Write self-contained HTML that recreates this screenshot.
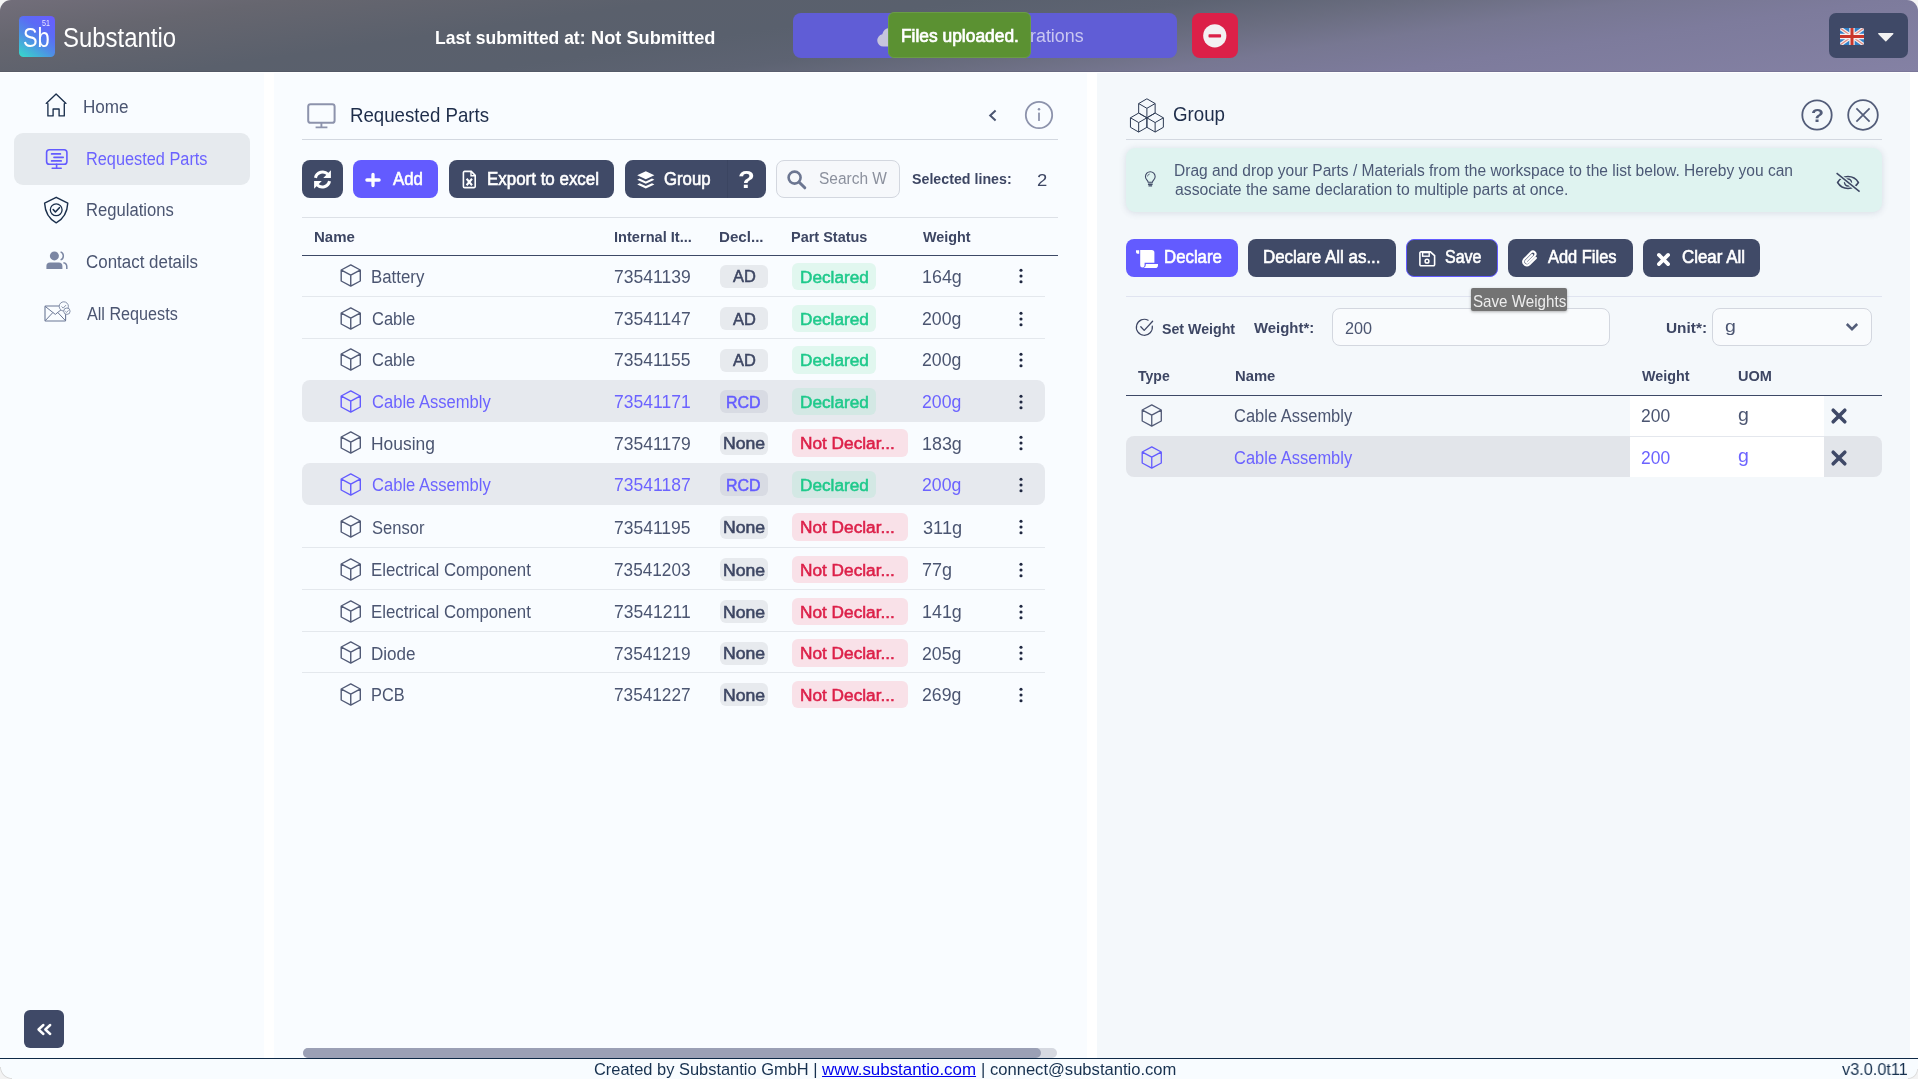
<!DOCTYPE html>
<html>
<head>
<meta charset="utf-8">
<title>Substantio</title>
<style>
*{box-sizing:border-box;margin:0;padding:0}
html,body{width:1918px;height:1079px;overflow:hidden;background:#ffffff;font-family:"Liberation Sans",sans-serif;color:#3d4663}
#w{position:absolute;left:0;top:0;width:1918px;height:1079px;will-change:transform}
.abs{position:absolute}
svg.abs{overflow:visible}
.t{position:absolute;white-space:nowrap;transform-origin:0 50%;display:block;line-height:40px}
#hdr{position:absolute;left:0;top:0;width:1918px;height:72px;border-radius:11px 11px 0 0;box-shadow:inset 0 -1px 0 rgba(20,25,45,.09);background:linear-gradient(171.8deg,#726e7a 0%,#66666f 12%,#5a606c 28%,#59606d 40%,#5d6372 50%,#6a6d80 59%,#777792 68%,#7d7b9c 78%,#8481a4 100%)}
#bgwhite{position:absolute;left:0;top:0;width:1918px;height:20px;background:#f5f5f5}
#side{position:absolute;left:0;top:73.2px;width:263.7px;height:984.8px;background:#f9fcff}
#main{position:absolute;left:274.2px;top:73.2px;width:812.5px;height:984.8px;background:#f9fcff}
#right{position:absolute;left:1097px;top:73.2px;width:812.8px;height:985px;background:#f4f8fb}
#foot{position:absolute;left:0;top:1058px;width:1918px;height:21px;border-top:1px solid #0e2946;background:#f8fcff}
.cbl{position:absolute;left:0;top:1067px;width:12px;height:12px;background:radial-gradient(circle at 100% 0,rgba(243,243,243,0) 10.6px,#d9d9d9 11.4px,#f3f3f3 12.4px)}
.cbr{position:absolute;left:1908px;top:1069px;width:10px;height:10px;background:radial-gradient(circle at 0 0,rgba(243,243,243,0) 8.6px,#dcdcdc 9.4px,#f3f3f3 10.4px)}
</style>
</head>
<body>
<div id="w">
<div id="bgwhite"></div>
<div id="hdr"></div>
<div id="side"></div>
<div id="main"></div>
<div id="right"></div>
<div id="foot"></div>
<div class="cbl"></div>
<div class="cbr"></div>
<!--HEADER-->
<div class="abs" style="left:19px;top:16px;width:36px;height:41px;border-radius:4.5px;background:linear-gradient(35deg,#36dcc8 0%,#4f8de6 40%,#5b6cf5 65%,#6a5cff 100%)"></div>
<span class="t" style="left:23.02px;top:17px;font-size:28.2px;color:#fff;transform:scaleX(0.7748);">Sb</span>
<span class="t" style="left:42.22px;top:3px;font-size:8.6px;color:#e8e6ff;transform:scaleX(0.8281);">51</span>
<span class="t" style="left:62.92px;top:17px;font-size:28.2px;color:#fff;transform:scaleX(0.8483);">Substantio</span>
<span class="t" style="left:435.06px;top:18px;font-size:18.6px;color:#fff;transform:scaleX(0.9398);font-weight:bold;">Last submitted at:</span>
<span class="t" style="left:590.52px;top:18px;font-size:18.6px;color:#fff;transform:scaleX(0.9790);font-weight:bold;">Not Submitted</span>
<div class="abs" style="left:793.00px;top:13.00px;width:384.00px;height:45.00px;background:#605dd6;border-radius:8px;"></div>
<svg class="abs" style="left:875.80px;top:23.80px;" width="29.00" height="23.60" viewBox="0 0 28 23"><path d="M7 22a6 6 0 0 1-1-11.9A8 8 0 0 1 21 8.5 6.8 6.8 0 0 1 21 22z" fill="#c6c5dc"/></svg>
<span class="t" style="left:1030.04px;top:16px;font-size:17.6px;color:#c9c7f1;transform:scaleX(1.0149);">rations</span>
<div class="abs" style="left:888px;top:12px;width:142.5px;height:45.5px;background:#5b9132;border-radius:6px;border:1px solid #6a9c45"></div>
<span class="t" style="left:900.61px;top:16px;font-size:17.6px;color:#fff;transform:scaleX(0.9878);-webkit-text-stroke:0.7px #fff;">Files uploaded.</span>
<div class="abs" style="left:1192.00px;top:13.00px;width:45.50px;height:45.00px;background:#dc2048;border-radius:8px;"></div>
<svg class="abs" style="left:1202.70px;top:24.00px;" width="23.60" height="23.60" viewBox="0 0 24 24"><circle cx="12" cy="12" r="11.8" fill="#f3f1f3"/><rect x="5.6" y="10.4" width="12.8" height="3.3" rx=".8" fill="#dc2048"/></svg>
<div class="abs" style="left:1829.00px;top:13.00px;width:79.00px;height:45.00px;background:#3f4967;border-radius:7px;"></div>
<svg class="abs" style="left:1840.00px;top:27.50px;" width="24.00" height="17.00" viewBox="0 0 24 17"><defs><clipPath id="fc"><rect width="24" height="17" rx="2"/></clipPath></defs><g clip-path="url(#fc)"><rect width="24" height="17" fill="#2f80c8"/><path d="M0 0L24 17M24 0L0 17" stroke="#f4ecec" stroke-width="3.6"/><path d="M0 0L24 17M24 0L0 17" stroke="#e08a80" stroke-width="1.2"/><path d="M12 0V17M0 8.5H24" stroke="#f6eeee" stroke-width="5.4"/><path d="M12 0V17M0 8.5H24" stroke="#c9362b" stroke-width="3"/></g></svg>
<svg class="abs" style="left:1877.50px;top:32.80px;" width="15.60" height="8.60" viewBox="0 0 15.6 8.6"><path d="M.6 0H15a.6.6 0 0 1 .4 1L8.3 8.3a.7.7 0 0 1-1 0L.2 1A.6.6 0 0 1 .6 0z" fill="#f1f1f1"/></svg>
<!--SIDEBAR-->
<div class="abs" style="left:14.00px;top:133.00px;width:236.00px;height:51.50px;background:#e6eaee;border-radius:9px;"></div>
<svg class="abs" style="left:44.60px;top:93.40px;" width="22.40" height="24.60" viewBox="0 0 22.4 24.6"><path d="M1.200 10.400L11.100 1 21 10.400M2.900 10.800V22.900h5.200V16h6V22.900h5.200V10.800" fill="none" stroke="#1b2f4c" stroke-width="1.350" stroke-linejoin="round" stroke-linecap="round"/></svg>
<span class="t" style="left:83.23px;top:87px;font-size:17.6px;color:#4b5571;transform:scaleX(0.9712);">Home</span>
<svg class="abs" style="left:45.00px;top:148.00px;" width="24.00" height="22.00" viewBox="0 0 24 22"><rect x="1.6" y="1.8" width="20.300" height="14.400" rx="2.800" fill="none" stroke="#635bff" stroke-width="1.600"/><path d="M6.600 5.900h8.800M9 9.300h9.200M6.600 12.900h9.600" stroke="#635bff" stroke-width="1.700" stroke-linecap="round"/><path d="M11.600 16.400V20M7.200 20.300h9" stroke="#635bff" stroke-width="1.600" stroke-linecap="round"/></svg>
<span class="t" style="left:85.69px;top:139px;font-size:17.6px;color:#6c63ff;transform:scaleX(0.9272);">Requested Parts</span>
<svg class="abs" style="left:43.40px;top:195.70px;" width="26.40" height="28.00" viewBox="0 0 26.4 28"><path d="M13.200 1.300L24.800 7.100c-.5 9-4 15.600-11.600 19.700C5.600 22.700 2.100 16.100 1.600 7.100z" fill="none" stroke="#1b2f4c" stroke-width="1.4" stroke-linejoin="round"/><circle cx="13.200" cy="13.800" r="5.900" fill="none" stroke="#1b2f4c" stroke-width="1.300"/><path d="M10.200 13.500l2.200 2.500 4-4.300" fill="none" stroke="#1b2f4c" stroke-width="1.6" stroke-linecap="round" stroke-linejoin="round"/></svg>
<span class="t" style="left:85.67px;top:190px;font-size:17.6px;color:#4b5571;transform:scaleX(0.9439);">Regulations</span>
<svg class="abs" style="left:45.60px;top:251.00px;" width="22.00" height="18.60" viewBox="0 0 22 18.6"><circle cx="8.4" cy="4.9" r="4.5" fill="#7b86a3"/><path d="M.4 17.9V15a3.6 3.6 0 0 1 3.6-3.6h8.8a3.6 3.6 0 0 1 3.6 3.6v2.9z" fill="#7b86a3"/><path d="M14.6 .9a4.3 4.3 0 0 1 0 8" fill="none" stroke="#7b86a3" stroke-width="1.5"/><path d="M17.4 11.8a4 4 0 0 1 3.4 4v2.2" fill="none" stroke="#7b86a3" stroke-width="1.5"/></svg>
<span class="t" style="left:85.95px;top:242px;font-size:17.6px;color:#4b5571;transform:scaleX(0.9623);">Contact details</span>
<svg class="abs" style="left:44.40px;top:301.40px;" width="27.00" height="21.00" viewBox="0 0 27 21"><rect x="1" y="5" width="20.6" height="15" rx=".8" fill="none" stroke="#6b7795" stroke-width="1.1"/><path d="M1.2 5.4l10.1 8 10-8M1.3 19.6l7.5-8M21.4 19.6l-7.5-8" fill="none" stroke="#6b7795" stroke-width="1"/><circle cx="19.8" cy="5.4" r="4.6" fill="#f9fcff" stroke="#6b7795" stroke-width=".8"/><path d="M17.6 5.5l1.6 1.6 2.8-3" fill="none" stroke="#6b7795" stroke-width=".8"/><circle cx="22.9" cy="10.2" r="3.2" fill="#f9fcff" stroke="#6b7795" stroke-width=".8"/><path d="M21.4 10.3l1.1 1.1 2-2.1" fill="none" stroke="#6b7795" stroke-width=".8"/></svg>
<span class="t" style="left:86.60px;top:294px;font-size:17.6px;color:#4b5571;transform:scaleX(0.9185);">All Requests</span>
<div class="abs" style="left:24.00px;top:1010.00px;width:40.00px;height:38.00px;background:#3f4967;border-radius:6px;"></div>
<svg class="abs" style="left:35.00px;top:1021.00px;" width="18.00" height="17.00" viewBox="0 0 18 17"><path d="M8.4 4L3.5 8.5 8.4 13M15.2 4L10.3 8.5l4.9 4.5" fill="none" stroke="#fff" stroke-width="2.4" stroke-linejoin="round" stroke-linecap="round"/></svg>
<!--MAIN-->
<svg class="abs" style="left:306.00px;top:102.00px;" width="32.00" height="28.00" viewBox="0 0 32 28"><rect x="2.2" y="2.2" width="26.4" height="18.6" rx="2.4" fill="none" stroke="#8d93ac" stroke-width="2"/><path d="M15.4 20.8v4.2M9.6 25.4h11.8" stroke="#8d93ac" stroke-width="1.9" fill="none"/></svg>
<span class="t" style="left:349.51px;top:95px;font-size:19.8px;color:#1e2d4a;transform:scaleX(0.9433);">Requested Parts</span>
<svg class="abs" style="left:987.00px;top:107.60px;" width="12.00" height="15.00" viewBox="0 0 12 15"><path d="M8.6 2.4L3.2 7.5l5.4 5.1" fill="none" stroke="#4b5571" stroke-width="2"/></svg>
<svg class="abs" style="left:1023.00px;top:99.00px;" width="32.00" height="32.00" viewBox="0 0 32 32"><circle cx="16" cy="16" r="13.2" fill="none" stroke="#8d93ac" stroke-width="1.8"/><circle cx="16" cy="10.2" r="1.25" fill="#8d93ac"/><rect x="15.1" y="13.4" width="1.8" height="8.6" rx=".6" fill="#8d93ac"/></svg>
<div class="abs" style="left:302.00px;top:139.00px;width:756.00px;height:1.00px;background:#d3d8e0;border-radius:0px;"></div>
<div class="abs" style="left:302.00px;top:160.00px;width:41.00px;height:38.00px;background:#404a67;border-radius:8px;"></div>
<svg class="abs" style="left:312.40px;top:169.40px;" width="21.00" height="21.00" viewBox="0 0 20 20"><path d="M3.3 8.4A7 7 0 0 1 15.2 5M16.7 11.600A7 7 0 0 1 4.800 15" fill="none" stroke="#fff" stroke-width="2.9"/><path d="M18 1.300v7.300h-7.300zM2 18.700v-7.300h7.300z" fill="#fff"/></svg>
<div class="abs" style="left:353.00px;top:160.00px;width:85.00px;height:38.00px;background:#635bff;border-radius:8px;"></div>
<svg class="abs" style="left:365.00px;top:171.50px;" width="16.00" height="16.00" viewBox="0 0 16 16"><path d="M8 2.400v11.200M1.900 8h12.200" stroke="#fff" stroke-width="3.300" stroke-linecap="round"/></svg>
<span class="t" style="left:392.50px;top:159px;font-size:17.6px;color:#fff;transform:scaleX(0.9580);-webkit-text-stroke:0.6px #fff;">Add</span>
<div class="abs" style="left:449.00px;top:160.00px;width:165.00px;height:38.00px;background:#404a67;border-radius:8px;"></div>
<svg class="abs" style="left:461.60px;top:170.20px;" width="15.00" height="19.00" viewBox="0 0 15 19"><path d="M2.6 1.4h6.6l4 4v11a1.2 1.2 0 0 1-1.2 1.2H2.6a1.2 1.2 0 0 1-1.2-1.2V2.600a1.2 1.2 0 0 1 1.2-1.200z" fill="none" stroke="#fff" stroke-width="1.6"/><path d="M9 1.400v4.400h4.400" fill="none" stroke="#fff" stroke-width="1.4"/><path d="M4.600 8.800l5.400 6.400M10 8.800l-5.400 6.400" stroke="#fff" stroke-width="2.100"/></svg>
<span class="t" style="left:486.64px;top:159px;font-size:17.6px;color:#fff;transform:scaleX(0.9625);-webkit-text-stroke:0.6px #fff;">Export to excel</span>
<div class="abs" style="left:625.00px;top:160.00px;width:141.00px;height:38.00px;background:#404a67;border-radius:8px;"></div>
<div class="abs" style="left:726.50px;top:160.00px;width:1.00px;height:38.00px;background:#3b4561;border-radius:0px;"></div>
<svg class="abs" style="left:636.00px;top:169.50px;" width="19.60" height="20.00" viewBox="0 0 19.6 20"><path d="M9.8 1.200l8.600 4-8.600 4-8.600-4z" fill="#fff"/><path d="M3.600 8.600L1.200 9.800l8.600 4 8.600-4-2.400-1.200-6.200 2.900z" fill="#fff"/><path d="M3.600 13.200l-2.400 1.200 8.600 4 8.600-4-2.400-1.200-6.200 2.900z" fill="#fff"/></svg>
<span class="t" style="left:663.86px;top:159px;font-size:17.6px;color:#fff;transform:scaleX(0.9526);-webkit-text-stroke:0.6px #fff;">Group</span>
<span class="t" style="left:738.36px;top:160px;font-size:23.5px;color:#fff;transform:scaleX(1.1681);font-weight:bold;">?</span>
<div class="abs" style="left:776px;top:160px;width:124px;height:38px;background:#f6f8fb;border:1px solid #d3d7df;border-radius:8px"></div>
<svg class="abs" style="left:786.00px;top:168.50px;" width="21.00" height="21.00" viewBox="0 0 21 21"><circle cx="8.6" cy="8.600" r="6" fill="none" stroke="#6c7691" stroke-width="2.600"/><path d="M13.200 13.200l5.600 5.600" stroke="#6c7691" stroke-width="3" stroke-linecap="round"/></svg>
<div class="abs" style="left:819px;top:165px;width:68px;height:28px;overflow:hidden">
<span class="t" style="left:0.10px;top:-7px;font-size:17.4px;color:#8b909d;transform:scaleX(0.8898);">Search Workspace</span>
</div>
<span class="t" style="left:911.64px;top:159px;font-size:14.6px;color:#3d4663;transform:scaleX(0.9749);font-weight:bold;">Selected lines:</span>
<span class="t" style="left:1036.58px;top:161px;font-size:16.6px;color:#3d4663;transform:scaleX(1.1131);">2</span>
<div class="abs" style="left:302.00px;top:217.00px;width:756.00px;height:1.00px;background:#dde1e7;border-radius:0px;"></div>
<span class="t" style="left:314.02px;top:217px;font-size:14.9px;color:#3d4663;transform:scaleX(1.0080);font-weight:bold;">Name</span>
<span class="t" style="left:614.05px;top:217px;font-size:14.9px;color:#3d4663;transform:scaleX(0.9809);font-weight:bold;">Internal It...</span>
<span class="t" style="left:719.02px;top:217px;font-size:14.9px;color:#3d4663;transform:scaleX(1.0157);font-weight:bold;">Decl...</span>
<span class="t" style="left:791.06px;top:217px;font-size:14.9px;color:#3d4663;transform:scaleX(0.9717);font-weight:bold;">Part Status</span>
<span class="t" style="left:923.00px;top:217px;font-size:14.9px;color:#3d4663;transform:scaleX(0.9646);font-weight:bold;">Weight</span>
<div class="abs" style="left:302.00px;top:255.00px;width:756.00px;height:1.00px;background:#3d4966;border-radius:0px;"></div>
<div class="abs" style="left:302.00px;top:296.00px;width:743.00px;height:1.00px;background:#e4e8ed;border-radius:0px;"></div>
<svg class="abs" style="left:338.60px;top:263.00px;" width="23.50" height="25.00" viewBox="0 0 23.5 25"><path d="M11.75 1.9L21.3 7v11L11.75 23.1 2.2 18V7zM2.4 7.1l9.35 5 9.35-5M11.75 12.2V23" fill="none" stroke="#515a76" stroke-width="1.4" stroke-linejoin="round"/></svg>
<span class="t" style="left:371.05px;top:257px;font-size:17.6px;color:#4b5571;transform:scaleX(0.9562);">Battery</span>
<span class="t" style="left:614.12px;top:257px;font-size:17.6px;color:#4b5571;transform:scaleX(0.9956);">73541139</span>
<div class="abs" style="left:720.00px;top:264.90px;width:48.00px;height:23.20px;background:#e7eaee;border-radius:6px;"></div>
<span class="t" style="left:733.00px;top:256px;font-size:17.4px;color:#3d4663;transform:scaleX(0.9436);-webkit-text-stroke:0.55px #3d4663;">AD</span>
<div class="abs" style="left:792.00px;top:262.50px;width:84.00px;height:27.60px;background:#e1f7ef;border-radius:6px;"></div>
<span class="t" style="left:799.92px;top:257px;font-size:17.4px;color:#1fc98b;transform:scaleX(0.9901);-webkit-text-stroke:0.55px #1fc98b;">Declared</span>
<span class="t" style="left:921.86px;top:257px;font-size:17.6px;color:#4b5571;transform:scaleX(1.0167);">164g</span>
<svg class="abs" style="left:1019.00px;top:268.30px;" width="4.00" height="16.00" viewBox="0 0 4 16"><circle cx="2" cy="2.2" r="1.55" fill="#1f2740"/><circle cx="2" cy="8" r="1.55" fill="#1f2740"/><circle cx="2" cy="13.8" r="1.55" fill="#1f2740"/></svg>
<div class="abs" style="left:302.00px;top:338.00px;width:743.00px;height:1.00px;background:#e4e8ed;border-radius:0px;"></div>
<svg class="abs" style="left:338.60px;top:305.90px;" width="23.50" height="25.00" viewBox="0 0 23.5 25"><path d="M11.75 1.9L21.3 7v11L11.75 23.1 2.2 18V7zM2.4 7.1l9.35 5 9.35-5M11.75 12.2V23" fill="none" stroke="#515a76" stroke-width="1.4" stroke-linejoin="round"/></svg>
<span class="t" style="left:371.57px;top:299px;font-size:17.6px;color:#4b5571;transform:scaleX(0.9380);">Cable</span>
<span class="t" style="left:614.12px;top:299px;font-size:17.6px;color:#4b5571;transform:scaleX(0.9956);">73541147</span>
<div class="abs" style="left:720.00px;top:307.10px;width:48.00px;height:23.20px;background:#e7eaee;border-radius:6px;"></div>
<span class="t" style="left:733.00px;top:299px;font-size:17.4px;color:#3d4663;transform:scaleX(0.9436);-webkit-text-stroke:0.55px #3d4663;">AD</span>
<div class="abs" style="left:792.00px;top:304.70px;width:84.00px;height:27.60px;background:#e1f7ef;border-radius:6px;"></div>
<span class="t" style="left:799.92px;top:299px;font-size:17.4px;color:#1fc98b;transform:scaleX(0.9901);-webkit-text-stroke:0.55px #1fc98b;">Declared</span>
<span class="t" style="left:922.32px;top:299px;font-size:17.6px;color:#4b5571;transform:scaleX(1.0047);">200g</span>
<svg class="abs" style="left:1019.00px;top:310.50px;" width="4.00" height="16.00" viewBox="0 0 4 16"><circle cx="2" cy="2.2" r="1.55" fill="#1f2740"/><circle cx="2" cy="8" r="1.55" fill="#1f2740"/><circle cx="2" cy="13.8" r="1.55" fill="#1f2740"/></svg>
<svg class="abs" style="left:338.60px;top:347.40px;" width="23.50" height="25.00" viewBox="0 0 23.5 25"><path d="M11.75 1.9L21.3 7v11L11.75 23.1 2.2 18V7zM2.4 7.1l9.35 5 9.35-5M11.75 12.2V23" fill="none" stroke="#515a76" stroke-width="1.4" stroke-linejoin="round"/></svg>
<span class="t" style="left:371.57px;top:340px;font-size:17.6px;color:#4b5571;transform:scaleX(0.9380);">Cable</span>
<span class="t" style="left:614.12px;top:340px;font-size:17.6px;color:#4b5571;transform:scaleX(0.9945);">73541155</span>
<div class="abs" style="left:720.00px;top:348.60px;width:48.00px;height:23.20px;background:#e7eaee;border-radius:6px;"></div>
<span class="t" style="left:733.00px;top:340px;font-size:17.4px;color:#3d4663;transform:scaleX(0.9436);-webkit-text-stroke:0.55px #3d4663;">AD</span>
<div class="abs" style="left:792.00px;top:346.20px;width:84.00px;height:27.60px;background:#e1f7ef;border-radius:6px;"></div>
<span class="t" style="left:799.92px;top:340px;font-size:17.4px;color:#1fc98b;transform:scaleX(0.9901);-webkit-text-stroke:0.55px #1fc98b;">Declared</span>
<span class="t" style="left:922.32px;top:340px;font-size:17.6px;color:#4b5571;transform:scaleX(1.0047);">200g</span>
<svg class="abs" style="left:1019.00px;top:352.00px;" width="4.00" height="16.00" viewBox="0 0 4 16"><circle cx="2" cy="2.2" r="1.55" fill="#1f2740"/><circle cx="2" cy="8" r="1.55" fill="#1f2740"/><circle cx="2" cy="13.8" r="1.55" fill="#1f2740"/></svg>
<div class="abs" style="left:302.00px;top:380.00px;width:743.00px;height:42.00px;background:#e6e9ee;border-radius:8px;"></div>
<svg class="abs" style="left:338.60px;top:388.90px;" width="23.50" height="25.00" viewBox="0 0 23.5 25"><path d="M11.75 1.9L21.3 7v11L11.75 23.1 2.2 18V7zM2.4 7.1l9.35 5 9.35-5M11.75 12.2V23" fill="none" stroke="#635bff" stroke-width="1.4" stroke-linejoin="round"/></svg>
<span class="t" style="left:371.57px;top:382px;font-size:17.6px;color:#6c63ff;transform:scaleX(0.9416);">Cable Assembly</span>
<span class="t" style="left:614.12px;top:382px;font-size:17.6px;color:#6c63ff;transform:scaleX(0.9956);">73541171</span>
<div class="abs" style="left:720.00px;top:390.10px;width:48.00px;height:23.20px;background:#d8dbe3;border-radius:6px;"></div>
<span class="t" style="left:726.42px;top:382px;font-size:17.4px;color:#635bff;transform:scaleX(0.9184);-webkit-text-stroke:0.55px #635bff;">RCD</span>
<div class="abs" style="left:792.00px;top:387.70px;width:84.00px;height:27.60px;background:#d3e8e4;border-radius:6px;"></div>
<span class="t" style="left:799.92px;top:382px;font-size:17.4px;color:#1fc98b;transform:scaleX(0.9901);-webkit-text-stroke:0.55px #1fc98b;">Declared</span>
<span class="t" style="left:922.32px;top:382px;font-size:17.6px;color:#6c63ff;transform:scaleX(1.0047);">200g</span>
<svg class="abs" style="left:1019.00px;top:393.50px;" width="4.00" height="16.00" viewBox="0 0 4 16"><circle cx="2" cy="2.2" r="1.55" fill="#1f2740"/><circle cx="2" cy="8" r="1.55" fill="#1f2740"/><circle cx="2" cy="13.8" r="1.55" fill="#1f2740"/></svg>
<svg class="abs" style="left:338.60px;top:430.40px;" width="23.50" height="25.00" viewBox="0 0 23.5 25"><path d="M11.75 1.9L21.3 7v11L11.75 23.1 2.2 18V7zM2.4 7.1l9.35 5 9.35-5M11.75 12.2V23" fill="none" stroke="#515a76" stroke-width="1.4" stroke-linejoin="round"/></svg>
<span class="t" style="left:371.01px;top:424px;font-size:17.6px;color:#4b5571;transform:scaleX(0.9899);">Housing</span>
<span class="t" style="left:614.12px;top:424px;font-size:17.6px;color:#4b5571;transform:scaleX(0.9956);">73541179</span>
<div class="abs" style="left:720.00px;top:431.60px;width:48.00px;height:23.20px;background:#e7eaee;border-radius:6px;"></div>
<span class="t" style="left:722.59px;top:423px;font-size:17.4px;color:#3d4663;transform:scaleX(1.0127);-webkit-text-stroke:0.55px #3d4663;">None</span>
<div class="abs" style="left:792.00px;top:429.20px;width:116.00px;height:27.60px;background:#f9e1e8;border-radius:6px;"></div>
<span class="t" style="left:799.92px;top:423px;font-size:17.4px;color:#dc2049;transform:scaleX(0.9911);-webkit-text-stroke:0.55px #dc2049;">Not Declar...</span>
<span class="t" style="left:921.86px;top:424px;font-size:17.6px;color:#4b5571;transform:scaleX(1.0167);">183g</span>
<svg class="abs" style="left:1019.00px;top:435.00px;" width="4.00" height="16.00" viewBox="0 0 4 16"><circle cx="2" cy="2.2" r="1.55" fill="#1f2740"/><circle cx="2" cy="8" r="1.55" fill="#1f2740"/><circle cx="2" cy="13.8" r="1.55" fill="#1f2740"/></svg>
<div class="abs" style="left:302.00px;top:463.00px;width:743.00px;height:42.00px;background:#e6e9ee;border-radius:8px;"></div>
<svg class="abs" style="left:338.60px;top:471.90px;" width="23.50" height="25.00" viewBox="0 0 23.5 25"><path d="M11.75 1.9L21.3 7v11L11.75 23.1 2.2 18V7zM2.4 7.1l9.35 5 9.35-5M11.75 12.2V23" fill="none" stroke="#635bff" stroke-width="1.4" stroke-linejoin="round"/></svg>
<span class="t" style="left:371.57px;top:465px;font-size:17.6px;color:#6c63ff;transform:scaleX(0.9416);">Cable Assembly</span>
<span class="t" style="left:614.12px;top:465px;font-size:17.6px;color:#6c63ff;transform:scaleX(0.9956);">73541187</span>
<div class="abs" style="left:720.00px;top:473.10px;width:48.00px;height:23.20px;background:#d8dbe3;border-radius:6px;"></div>
<span class="t" style="left:726.42px;top:465px;font-size:17.4px;color:#635bff;transform:scaleX(0.9184);-webkit-text-stroke:0.55px #635bff;">RCD</span>
<div class="abs" style="left:792.00px;top:470.70px;width:84.00px;height:27.60px;background:#d3e8e4;border-radius:6px;"></div>
<span class="t" style="left:799.92px;top:465px;font-size:17.4px;color:#1fc98b;transform:scaleX(0.9901);-webkit-text-stroke:0.55px #1fc98b;">Declared</span>
<span class="t" style="left:922.32px;top:465px;font-size:17.6px;color:#6c63ff;transform:scaleX(1.0047);">200g</span>
<svg class="abs" style="left:1019.00px;top:476.50px;" width="4.00" height="16.00" viewBox="0 0 4 16"><circle cx="2" cy="2.2" r="1.55" fill="#1f2740"/><circle cx="2" cy="8" r="1.55" fill="#1f2740"/><circle cx="2" cy="13.8" r="1.55" fill="#1f2740"/></svg>
<div class="abs" style="left:302.00px;top:547.00px;width:743.00px;height:1.00px;background:#e4e8ed;border-radius:0px;"></div>
<svg class="abs" style="left:338.60px;top:514.40px;" width="23.50" height="25.00" viewBox="0 0 23.5 25"><path d="M11.75 1.9L21.3 7v11L11.75 23.1 2.2 18V7zM2.4 7.1l9.35 5 9.35-5M11.75 12.2V23" fill="none" stroke="#515a76" stroke-width="1.4" stroke-linejoin="round"/></svg>
<span class="t" style="left:371.65px;top:508px;font-size:17.6px;color:#4b5571;transform:scaleX(0.9409);">Sensor</span>
<span class="t" style="left:614.12px;top:508px;font-size:17.6px;color:#4b5571;transform:scaleX(0.9945);">73541195</span>
<div class="abs" style="left:720.00px;top:515.60px;width:48.00px;height:23.20px;background:#e7eaee;border-radius:6px;"></div>
<span class="t" style="left:722.59px;top:507px;font-size:17.4px;color:#3d4663;transform:scaleX(1.0127);-webkit-text-stroke:0.55px #3d4663;">None</span>
<div class="abs" style="left:792.00px;top:513.20px;width:116.00px;height:27.60px;background:#f9e1e8;border-radius:6px;"></div>
<span class="t" style="left:799.92px;top:507px;font-size:17.4px;color:#dc2049;transform:scaleX(0.9911);-webkit-text-stroke:0.55px #dc2049;">Not Declar...</span>
<span class="t" style="left:922.56px;top:508px;font-size:17.6px;color:#4b5571;transform:scaleX(1.0341);">311g</span>
<svg class="abs" style="left:1019.00px;top:519.00px;" width="4.00" height="16.00" viewBox="0 0 4 16"><circle cx="2" cy="2.2" r="1.55" fill="#1f2740"/><circle cx="2" cy="8" r="1.55" fill="#1f2740"/><circle cx="2" cy="13.8" r="1.55" fill="#1f2740"/></svg>
<div class="abs" style="left:302.00px;top:589.00px;width:743.00px;height:1.00px;background:#e4e8ed;border-radius:0px;"></div>
<svg class="abs" style="left:338.60px;top:556.90px;" width="23.50" height="25.00" viewBox="0 0 23.5 25"><path d="M11.75 1.9L21.3 7v11L11.75 23.1 2.2 18V7zM2.4 7.1l9.35 5 9.35-5M11.75 12.2V23" fill="none" stroke="#515a76" stroke-width="1.4" stroke-linejoin="round"/></svg>
<span class="t" style="left:371.05px;top:550px;font-size:17.6px;color:#4b5571;transform:scaleX(0.9560);">Electrical Component</span>
<span class="t" style="left:614.14px;top:550px;font-size:17.6px;color:#4b5571;transform:scaleX(0.9774);">73541203</span>
<div class="abs" style="left:720.00px;top:558.10px;width:48.00px;height:23.20px;background:#e7eaee;border-radius:6px;"></div>
<span class="t" style="left:722.59px;top:550px;font-size:17.4px;color:#3d4663;transform:scaleX(1.0127);-webkit-text-stroke:0.55px #3d4663;">None</span>
<div class="abs" style="left:792.00px;top:555.70px;width:116.00px;height:27.60px;background:#f9e1e8;border-radius:6px;"></div>
<span class="t" style="left:799.92px;top:550px;font-size:17.4px;color:#dc2049;transform:scaleX(0.9911);-webkit-text-stroke:0.55px #dc2049;">Not Declar...</span>
<span class="t" style="left:922.30px;top:550px;font-size:17.6px;color:#4b5571;transform:scaleX(1.0231);">77g</span>
<svg class="abs" style="left:1019.00px;top:561.50px;" width="4.00" height="16.00" viewBox="0 0 4 16"><circle cx="2" cy="2.2" r="1.55" fill="#1f2740"/><circle cx="2" cy="8" r="1.55" fill="#1f2740"/><circle cx="2" cy="13.8" r="1.55" fill="#1f2740"/></svg>
<div class="abs" style="left:302.00px;top:631.00px;width:743.00px;height:1.00px;background:#e4e8ed;border-radius:0px;"></div>
<svg class="abs" style="left:338.60px;top:598.90px;" width="23.50" height="25.00" viewBox="0 0 23.5 25"><path d="M11.75 1.9L21.3 7v11L11.75 23.1 2.2 18V7zM2.4 7.1l9.35 5 9.35-5M11.75 12.2V23" fill="none" stroke="#515a76" stroke-width="1.4" stroke-linejoin="round"/></svg>
<span class="t" style="left:371.05px;top:592px;font-size:17.6px;color:#4b5571;transform:scaleX(0.9560);">Electrical Component</span>
<span class="t" style="left:614.12px;top:592px;font-size:17.6px;color:#4b5571;transform:scaleX(0.9956);">73541211</span>
<div class="abs" style="left:720.00px;top:600.10px;width:48.00px;height:23.20px;background:#e7eaee;border-radius:6px;"></div>
<span class="t" style="left:722.59px;top:592px;font-size:17.4px;color:#3d4663;transform:scaleX(1.0127);-webkit-text-stroke:0.55px #3d4663;">None</span>
<div class="abs" style="left:792.00px;top:597.70px;width:116.00px;height:27.60px;background:#f9e1e8;border-radius:6px;"></div>
<span class="t" style="left:799.92px;top:592px;font-size:17.4px;color:#dc2049;transform:scaleX(0.9911);-webkit-text-stroke:0.55px #dc2049;">Not Declar...</span>
<span class="t" style="left:921.86px;top:592px;font-size:17.6px;color:#4b5571;transform:scaleX(1.0167);">141g</span>
<svg class="abs" style="left:1019.00px;top:603.50px;" width="4.00" height="16.00" viewBox="0 0 4 16"><circle cx="2" cy="2.2" r="1.55" fill="#1f2740"/><circle cx="2" cy="8" r="1.55" fill="#1f2740"/><circle cx="2" cy="13.8" r="1.55" fill="#1f2740"/></svg>
<div class="abs" style="left:302.00px;top:672.00px;width:743.00px;height:1.00px;background:#e4e8ed;border-radius:0px;"></div>
<svg class="abs" style="left:338.60px;top:640.40px;" width="23.50" height="25.00" viewBox="0 0 23.5 25"><path d="M11.75 1.9L21.3 7v11L11.75 23.1 2.2 18V7zM2.4 7.1l9.35 5 9.35-5M11.75 12.2V23" fill="none" stroke="#515a76" stroke-width="1.4" stroke-linejoin="round"/></svg>
<span class="t" style="left:371.03px;top:634px;font-size:17.6px;color:#4b5571;transform:scaleX(0.9698);">Diode</span>
<span class="t" style="left:614.14px;top:634px;font-size:17.6px;color:#4b5571;transform:scaleX(0.9785);">73541219</span>
<div class="abs" style="left:720.00px;top:641.60px;width:48.00px;height:23.20px;background:#e7eaee;border-radius:6px;"></div>
<span class="t" style="left:722.59px;top:633px;font-size:17.4px;color:#3d4663;transform:scaleX(1.0127);-webkit-text-stroke:0.55px #3d4663;">None</span>
<div class="abs" style="left:792.00px;top:639.20px;width:116.00px;height:27.60px;background:#f9e1e8;border-radius:6px;"></div>
<span class="t" style="left:799.92px;top:633px;font-size:17.4px;color:#dc2049;transform:scaleX(0.9911);-webkit-text-stroke:0.55px #dc2049;">Not Declar...</span>
<span class="t" style="left:922.32px;top:634px;font-size:17.6px;color:#4b5571;transform:scaleX(1.0047);">205g</span>
<svg class="abs" style="left:1019.00px;top:645.00px;" width="4.00" height="16.00" viewBox="0 0 4 16"><circle cx="2" cy="2.2" r="1.55" fill="#1f2740"/><circle cx="2" cy="8" r="1.55" fill="#1f2740"/><circle cx="2" cy="13.8" r="1.55" fill="#1f2740"/></svg>
<svg class="abs" style="left:338.60px;top:681.90px;" width="23.50" height="25.00" viewBox="0 0 23.5 25"><path d="M11.75 1.9L21.3 7v11L11.75 23.1 2.2 18V7zM2.4 7.1l9.35 5 9.35-5M11.75 12.2V23" fill="none" stroke="#515a76" stroke-width="1.4" stroke-linejoin="round"/></svg>
<span class="t" style="left:371.09px;top:675px;font-size:17.6px;color:#4b5571;transform:scaleX(0.9298);">PCB</span>
<span class="t" style="left:614.14px;top:675px;font-size:17.6px;color:#4b5571;transform:scaleX(0.9785);">73541227</span>
<div class="abs" style="left:720.00px;top:683.10px;width:48.00px;height:23.20px;background:#e7eaee;border-radius:6px;"></div>
<span class="t" style="left:722.59px;top:675px;font-size:17.4px;color:#3d4663;transform:scaleX(1.0127);-webkit-text-stroke:0.55px #3d4663;">None</span>
<div class="abs" style="left:792.00px;top:680.70px;width:116.00px;height:27.60px;background:#f9e1e8;border-radius:6px;"></div>
<span class="t" style="left:799.92px;top:675px;font-size:17.4px;color:#dc2049;transform:scaleX(0.9911);-webkit-text-stroke:0.55px #dc2049;">Not Declar...</span>
<span class="t" style="left:922.32px;top:675px;font-size:17.6px;color:#4b5571;transform:scaleX(1.0047);">269g</span>
<svg class="abs" style="left:1019.00px;top:686.50px;" width="4.00" height="16.00" viewBox="0 0 4 16"><circle cx="2" cy="2.2" r="1.55" fill="#1f2740"/><circle cx="2" cy="8" r="1.55" fill="#1f2740"/><circle cx="2" cy="13.8" r="1.55" fill="#1f2740"/></svg>
<div class="abs" style="left:303.00px;top:1048.00px;width:754.00px;height:9.60px;background:#d6d9e1;border-radius:5px;"></div>
<div class="abs" style="left:303.00px;top:1048.00px;width:738.00px;height:9.60px;background:#9ba0b5;border-radius:5px;"></div>
<!--RIGHT-->
<svg class="abs" style="left:1129.50px;top:98.00px;" width="34.00" height="34.00" viewBox="0 0 34 34"><path d="M16.9 0.8000000000000007L25.13 5.550000000000001V15.05L16.9 19.8L8.67 15.05V5.550000000000001zM8.67 5.550000000000001L16.9 10.3L25.13 5.550000000000001M16.9 10.3V19.8M8.67 15.05L16.90 19.8V29.3L8.67 34.05L0.44 29.3V19.8zM0.44 19.8L8.67 24.55L16.90 19.8M8.67 24.55V34.05M25.13 15.05L33.36 19.8V29.3L25.13 34.05L16.90 29.3V19.8zM16.90 19.8L25.13 24.55L33.36 19.8M25.13 24.55V34.05" fill="none" stroke="#2b3952" stroke-width="1" stroke-linejoin="round"/></svg>
<span class="t" style="left:1173.06px;top:94px;font-size:19.8px;color:#1e2d4a;transform:scaleX(0.9463);">Group</span>
<svg class="abs" style="left:1800.00px;top:98.00px;" width="34.00" height="34.00" viewBox="0 0 34 34"><circle cx="17" cy="17" r="14.7" fill="none" stroke="#535d79" stroke-width="1.8"/></svg>
<span class="t" style="left:1810.65px;top:96px;font-size:17.5px;color:#535d79;transform:scaleX(1.2101);font-weight:bold;">?</span>
<svg class="abs" style="left:1845.50px;top:98.00px;" width="34.00" height="34.00" viewBox="0 0 34 34"><circle cx="17" cy="17" r="14.800" fill="none" stroke="#535d79" stroke-width="1.8"/><path d="M10.400 10.400l13.200 13.200M23.600 10.400L10.400 23.600" stroke="#535d79" stroke-width="1.7"/></svg>
<div class="abs" style="left:1126.00px;top:139.00px;width:756.00px;height:1.00px;background:#d3d8e0;border-radius:0px;"></div>
<div class="abs" style="left:1126px;top:148px;width:756px;height:63.6px;background:#dff3f0;border-radius:9px;box-shadow:0 1px 7px rgba(60,80,110,.16)"></div>
<svg class="abs" style="left:1144.20px;top:170.60px;" width="12.60" height="16.40" viewBox="0 0 14 18"><path d="M4.600 12.400c0-2-3-3-3-6.200a5.400 5.400 0 0 1 10.800 0c0 3.200-3 4.200-3 6.200z" fill="none" stroke="#3d4663" stroke-width="1.2"/><path d="M4.400 14.600h5.200" stroke="#3d4663" stroke-width="1.600"/><path d="M5 16.400h4" stroke="#3d4663" stroke-width="1.400"/><path d="M3.800 6a3.200 3.200 0 0 1 2.600-2.800" fill="none" stroke="#3d4663" stroke-width=".8"/></svg>
<span class="t" style="left:1173.96px;top:151px;font-size:16px;color:#4c5976;transform:scaleX(0.9721);">Drag and drop your Parts / Materials from the workspace to the list below. Hereby you can</span>
<span class="t" style="left:1174.57px;top:170px;font-size:16px;color:#4c5976;transform:scaleX(0.9849);">associate the same declaration to multiple parts at once.</span>
<svg class="abs" style="left:1835.00px;top:171.50px;" width="26.00" height="21.00" viewBox="0 0 26 21"><path d="M2.600 10.500C5 6.500 9 4.600 13 4.600s8 1.900 10.400 5.900C21 14.500 17 16.400 13 16.400S5 14.500 2.600 10.500z" fill="none" stroke="#3d4663" stroke-width="1.500"/><circle cx="13" cy="10.500" r="3.400" fill="none" stroke="#3d4663" stroke-width="1.500"/><path d="M1.600 1.200L24.600 19.600" stroke="#dff3f0" stroke-width="4"/><path d="M1.600 1.200L24.600 19.600" stroke="#3d4663" stroke-width="1.500"/></svg>
<div class="abs" style="left:1126.00px;top:239.00px;width:112.00px;height:38.00px;background:#635bff;border-radius:8px;"></div>
<svg class="abs" style="left:1135.00px;top:249.00px;" width="24.00" height="20.00" viewBox="0 0 24 20"><path d="M1 1.200h3.200v3.600H2.600A1.700 1.700 0 0 1 1 3.100z" fill="#fff"/><path d="M5.200 1h11.600a2.600 2.600 0 0 1 2.600 2.600v10.200H9.600v2.400a2.200 2.200 0 0 1-4.400 0z" fill="#fff"/><path d="M10.800 15h12.200v1.200a2.800 2.800 0 0 1-2.800 2.800H8.400a3.400 3.400 0 0 0 2.400-3z" fill="#fff"/></svg>
<span class="t" style="left:1164.16px;top:237px;font-size:17.6px;color:#fff;transform:scaleX(0.9552);-webkit-text-stroke:0.6px #fff;">Declare</span>
<div class="abs" style="left:1248.00px;top:239.00px;width:148.00px;height:38.00px;background:#404a67;border-radius:8px;"></div>
<span class="t" style="left:1263.35px;top:237px;font-size:17.6px;color:#fff;transform:scaleX(0.9612);-webkit-text-stroke:0.6px #fff;">Declare All as...</span>
<div class="abs" style="left:1406px;top:239px;width:92px;height:38px;background:#404a67;border-radius:8px;border:1.3px solid #635bff"></div>
<svg class="abs" style="left:1418.50px;top:251.00px;" width="16.50" height="15.50" viewBox="0 0 16.500 15.500"><path d="M2 .9h9.400l4.200 3.800v8.900a1.100 1.100 0 0 1-1.100 1.100H2A1.100 1.100 0 0 1 .9 13.600V2A1.100 1.100 0 0 1 2 .9z" fill="none" stroke="#fff" stroke-width="1.600"/><rect x="3.600" y="1.600" width="6.600" height="3.600" fill="none" stroke="#fff" stroke-width="1.400"/><circle cx="8" cy="10.200" r="1.900" fill="none" stroke="#fff" stroke-width="1.500"/></svg>
<span class="t" style="left:1445.48px;top:237px;font-size:17.6px;color:#fff;transform:scaleX(0.9112);-webkit-text-stroke:0.6px #fff;">Save</span>
<div class="abs" style="left:1508.00px;top:239.00px;width:125.00px;height:38.00px;background:#404a67;border-radius:8px;"></div>
<svg class="abs" style="left:1519.50px;top:248.50px;" width="19.00" height="19.00" viewBox="0 0 19 19"><path d="M8.600 12.800l5.400-5.400a1.900 1.900 0 0 0-2.700-2.700L5 11a3.300 3.300 0 0 0 4.700 4.700l6-6" fill="none" stroke="#fff" stroke-width="0"/><path d="M15.900 8.900l-6.600 6.600a3.700 3.700 0 0 1-5.200-5.200l7-7a2.500 2.500 0 0 1 3.600 3.600l-6.600 6.600a1.200 1.200 0 0 1-1.800-1.800l5.800-5.800" fill="none" stroke="#fff" stroke-width="2.100" stroke-linecap="round"/></svg>
<span class="t" style="left:1548.00px;top:237px;font-size:17.6px;color:#fff;transform:scaleX(0.9344);-webkit-text-stroke:0.6px #fff;">Add Files</span>
<div class="abs" style="left:1643.00px;top:239.00px;width:117.00px;height:38.00px;background:#404a67;border-radius:8px;"></div>
<svg class="abs" style="left:1655.50px;top:251.50px;" width="15.00" height="15.00" viewBox="0 0 15 15"><path d="M2.900 2.900l9.200 9.200M12.100 2.900L2.900 12.100" stroke="#fff" stroke-width="3.700" stroke-linecap="round"/></svg>
<span class="t" style="left:1681.66px;top:237px;font-size:17.6px;color:#fff;transform:scaleX(0.9601);-webkit-text-stroke:0.6px #fff;">Clear All</span>
<div class="abs" style="left:1126.00px;top:296.00px;width:756.00px;height:1.00px;background:#e0e4f0;border-radius:0px;"></div>
<svg class="abs" style="left:1135.00px;top:318.00px;" width="19.50" height="19.00" viewBox="0 0 19.500 19"><path d="M17.300 8.200a8 8 0 1 1-4.200-6" fill="none" stroke="#3d4663" stroke-width="1.200" stroke-linecap="round"/><path d="M5.800 8.800l3.400 3.600 8.400-9.200" fill="none" stroke="#3d4663" stroke-width="1.300" stroke-linecap="round" stroke-linejoin="round"/></svg>
<span class="t" style="left:1161.55px;top:309px;font-size:15px;color:#3d4663;transform:scaleX(0.9462);font-weight:bold;">Set Weight</span>
<span class="t" style="left:1254.30px;top:308px;font-size:15px;color:#3d4663;transform:scaleX(0.9937);font-weight:bold;">Weight*:</span>
<div class="abs" style="left:1332px;top:308.400px;width:277.600px;height:37.200px;background:#f9fbfd;border:1px solid #d3d7df;border-radius:8px"></div>
<span class="t" style="left:1344.59px;top:308px;font-size:17.4px;color:#4b5571;transform:scaleX(0.9312);">200</span>
<span class="t" style="left:1666.08px;top:308px;font-size:15px;color:#3d4663;transform:scaleX(1.0258);font-weight:bold;">Unit*:</span>
<div class="abs" style="left:1712px;top:308.400px;width:159.600px;height:37.200px;background:#f9fbfd;border:1px solid #d3d7df;border-radius:8px"></div>
<span class="t" style="left:1724.72px;top:306px;font-size:17.4px;color:#4b5571;transform:scaleX(1.1242);">g</span>
<svg class="abs" style="left:1845.00px;top:322.00px;" width="14.00" height="10.00" viewBox="0 0 14 10"><path d="M1.800 2l5.200 5.200L12.200 2" fill="none" stroke="#535d79" stroke-width="2.500"/></svg>
<div class="abs" style="left:1471px;top:288px;width:96px;height:22.600px;background:#737373;border-radius:2px;box-shadow:0 1px 3px rgba(0,0,0,.3)"></div>
<span class="t" style="left:1473.02px;top:281px;font-size:16.2px;color:#ededed;transform:scaleX(0.9366);">Save Weights</span>
<span class="t" style="left:1137.86px;top:356px;font-size:14.9px;color:#3d4663;transform:scaleX(0.9432);font-weight:bold;">Type</span>
<span class="t" style="left:1234.54px;top:356px;font-size:14.9px;color:#3d4663;transform:scaleX(0.9952);font-weight:bold;">Name</span>
<span class="t" style="left:1642.00px;top:356px;font-size:14.9px;color:#3d4663;transform:scaleX(0.9605);font-weight:bold;">Weight</span>
<span class="t" style="left:1738.43px;top:356px;font-size:14.9px;color:#3d4663;transform:scaleX(0.9779);font-weight:bold;">UOM</span>
<div class="abs" style="left:1126.00px;top:395.00px;width:756.00px;height:1.00px;background:#3d4966;border-radius:0px;"></div>
<div class="abs" style="left:1126.00px;top:436.00px;width:756.00px;height:41.00px;background:#e2e5ea;border-radius:8px;"></div>
<div class="abs" style="left:1630.00px;top:396.00px;width:194.00px;height:81.00px;background:#ffffff;border-radius:0px;"></div>
<div class="abs" style="left:1630.00px;top:436.00px;width:194.00px;height:1.00px;background:#e4e7ed;border-radius:0px;"></div>
<svg class="abs" style="left:1140.40px;top:403.20px;" width="23.50" height="25.00" viewBox="0 0 23.5 25"><path d="M11.75 1.9L21.3 7v11L11.75 23.1 2.2 18V7zM2.4 7.1l9.35 5 9.35-5M11.75 12.2V23" fill="none" stroke="#515a76" stroke-width="1.3" stroke-linejoin="round"/></svg>
<span class="t" style="left:1234.48px;top:396px;font-size:17.6px;color:#4b5571;transform:scaleX(0.9369);">Cable Assembly</span>
<span class="t" style="left:1641.13px;top:396px;font-size:17.6px;color:#4b5571;transform:scaleX(0.9925);">200</span>
<span class="t" style="left:1738.22px;top:395px;font-size:17.6px;color:#4b5571;transform:scaleX(1.1114);">g</span>
<svg class="abs" style="left:1829.50px;top:406.60px;" width="18.00" height="18.00" viewBox="0 0 18 18"><path d="M3.200 3.200l11.600 11.600M14.800 3.200L3.200 14.800" stroke="#3f4967" stroke-width="3.600" stroke-linecap="round"/></svg>
<svg class="abs" style="left:1140.40px;top:444.60px;" width="23.50" height="25.00" viewBox="0 0 23.5 25"><path d="M11.75 1.9L21.3 7v11L11.75 23.1 2.2 18V7zM2.4 7.1l9.35 5 9.35-5M11.75 12.2V23" fill="none" stroke="#635bff" stroke-width="1.3" stroke-linejoin="round"/></svg>
<span class="t" style="left:1234.48px;top:438px;font-size:17.6px;color:#6c63ff;transform:scaleX(0.9369);">Cable Assembly</span>
<span class="t" style="left:1641.13px;top:438px;font-size:17.6px;color:#6c63ff;transform:scaleX(0.9925);">200</span>
<span class="t" style="left:1738.22px;top:436px;font-size:17.6px;color:#6c63ff;transform:scaleX(1.1114);">g</span>
<svg class="abs" style="left:1829.50px;top:448.80px;" width="18.00" height="18.00" viewBox="0 0 18 18"><path d="M3.200 3.200l11.600 11.600M14.800 3.200L3.200 14.800" stroke="#3f4967" stroke-width="3.600" stroke-linecap="round"/></svg>
<!--FOOTER-->
<span class="t" style="left:593.68px;top:1050px;font-size:16.8px;color:#17314f;transform:scaleX(0.9792);">Created by Substantio GmbH |</span>
<span class="t" style="left:822.08px;top:1050px;font-size:16.8px;color:#0000ee;transform:scaleX(1.0071);text-decoration:underline;">www.substantio.com</span>
<span class="t" style="left:980.99px;top:1050px;font-size:16.8px;color:#17314f;transform:scaleX(0.9884);">| connect@substantio.com</span>
<span class="t" style="left:1842.00px;top:1050px;font-size:16.8px;color:#17314f;transform:scaleX(0.9685);">v3.0.0t11</span>
</div>
</body>
</html>
